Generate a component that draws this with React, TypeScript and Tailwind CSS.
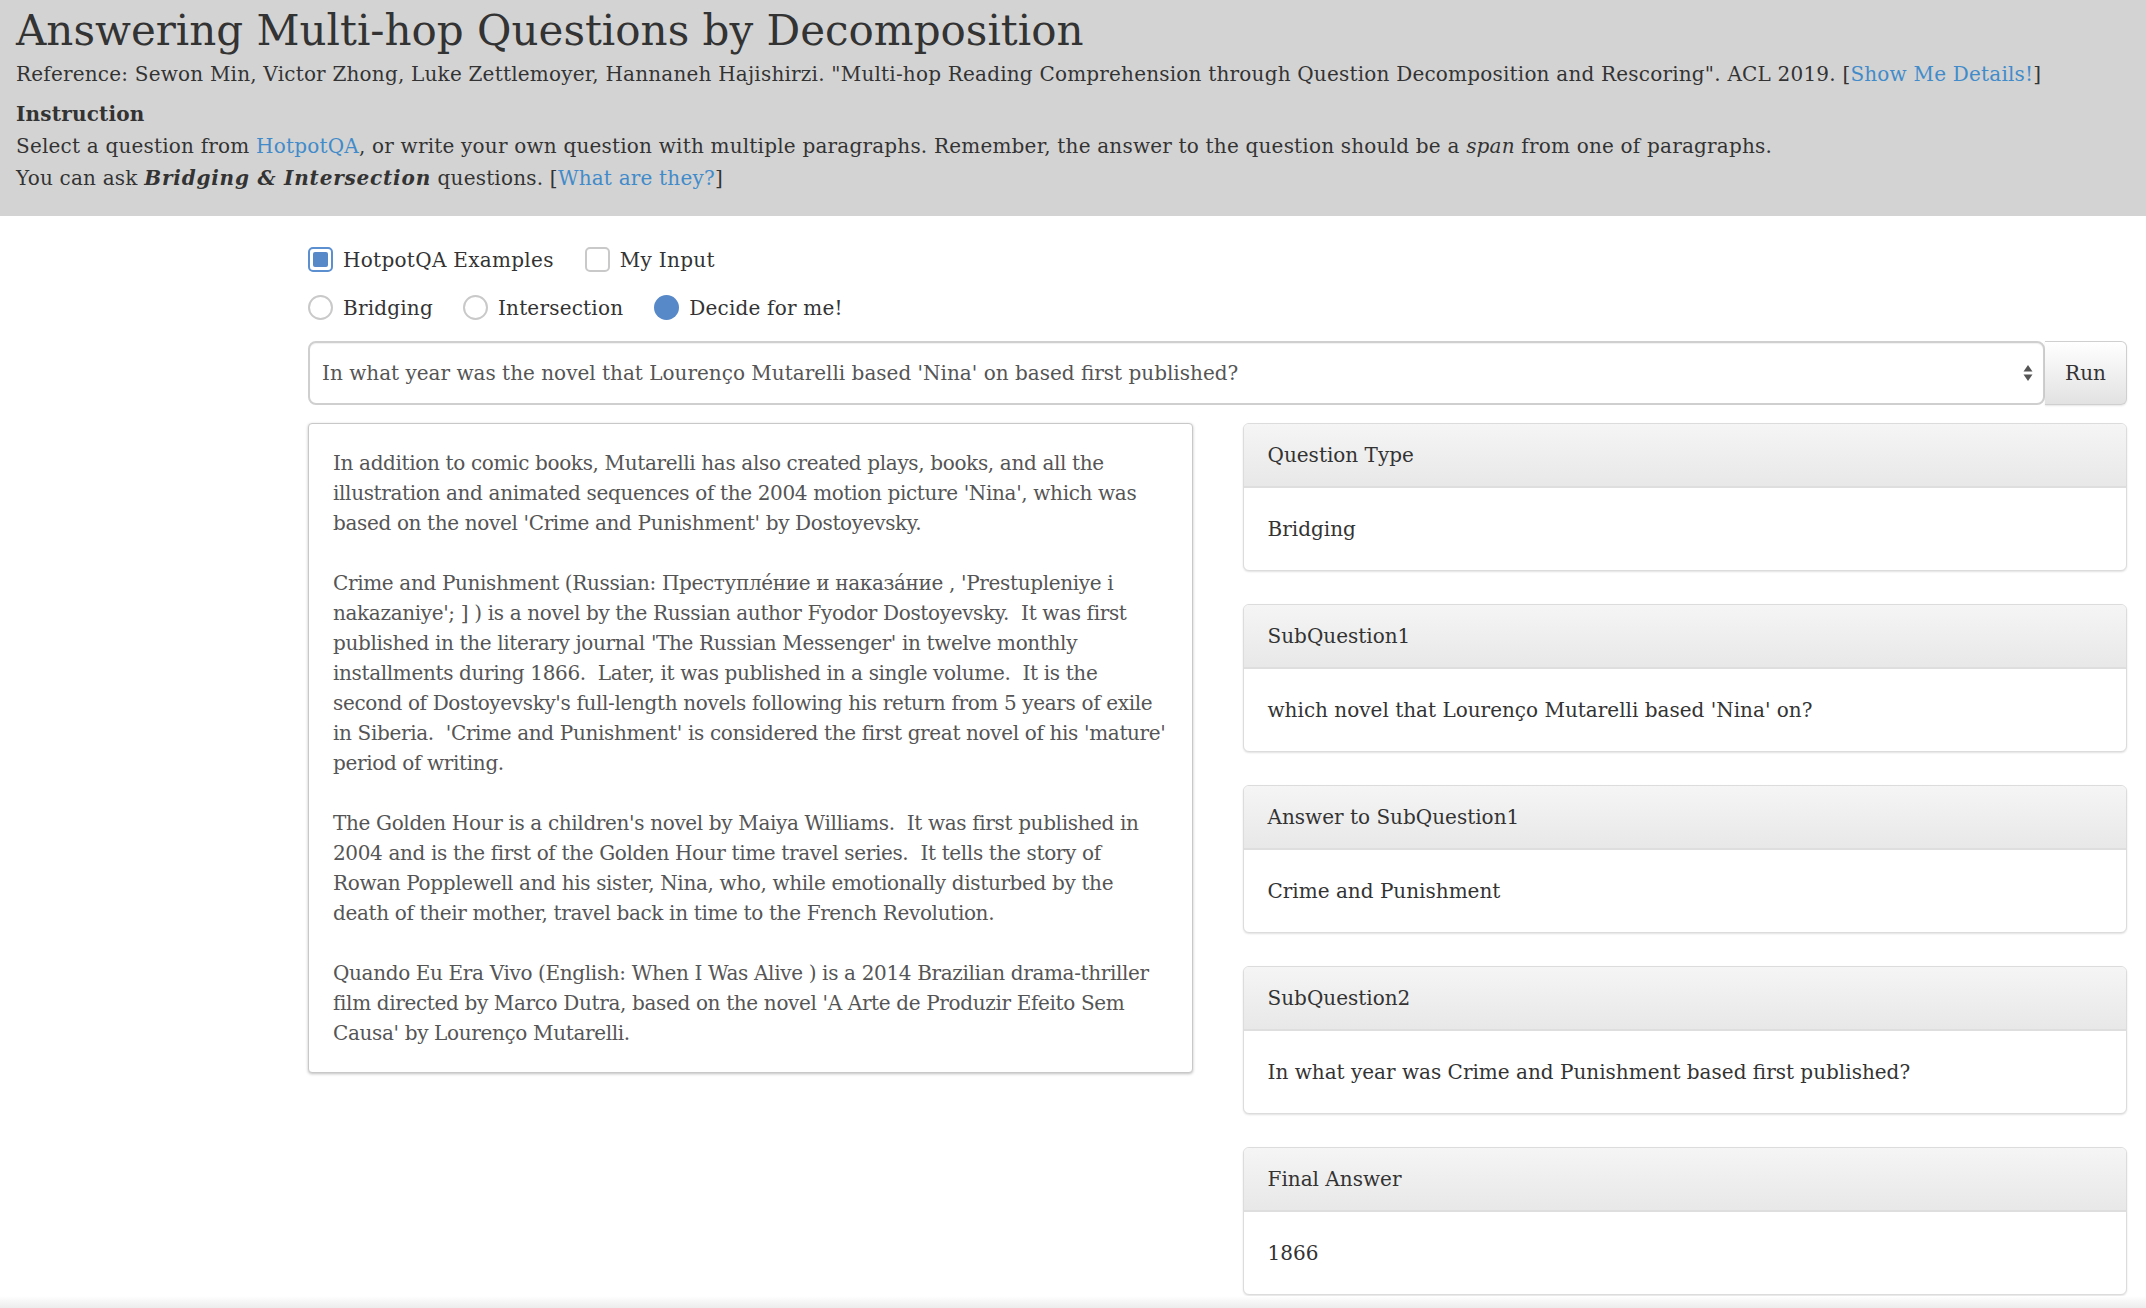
import React from "react";

const paragraphs: string[][] = [
  [
    "In addition to comic books, Mutarelli has also created plays, books, and all the",
    "illustration and animated sequences of the 2004 motion picture 'Nina', which was",
    "based on the novel 'Crime and Punishment' by Dostoyevsky.",
  ],
  [
    "Crime and Punishment (Russian: Преступле\u0301ние и наказа\u0301ние , 'Prestupleniye i",
    "nakazaniye'; ] ) is a novel by the Russian author Fyodor Dostoyevsky.  It was first",
    "published in the literary journal 'The Russian Messenger' in twelve monthly",
    "installments during 1866.  Later, it was published in a single volume.  It is the",
    "second of Dostoyevsky's full-length novels following his return from 5 years of exile",
    "in Siberia.  'Crime and Punishment' is considered the first great novel of his 'mature'",
    "period of writing.",
  ],
  [
    "The Golden Hour is a children's novel by Maiya Williams.  It was first published in",
    "2004 and is the first of the Golden Hour time travel series.  It tells the story of",
    "Rowan Popplewell and his sister, Nina, who, while emotionally disturbed by the",
    "death of their mother, travel back in time to the French Revolution.",
  ],
  [
    "Quando Eu Era Vivo (English: When I Was Alive ) is a 2014 Brazilian drama-thriller",
    "film directed by Marco Dutra, based on the novel 'A Arte de Produzir Efeito Sem",
    "Causa' by Lourenço Mutarelli.",
  ],
];

const results = [
  { title: "Question Type", value: "Bridging" },
  { title: "SubQuestion1", value: "which novel that Lourenço Mutarelli based 'Nina' on?" },
  { title: "Answer to SubQuestion1", value: "Crime and Punishment" },
  { title: "SubQuestion2", value: "In what year was Crime and Punishment based first published?" },
  { title: "Final Answer", value: "1866" },
];

function Checkbox({ checked }: { checked: boolean }) {
  if (checked) {
    return (
      <span className="flex h-[25px] w-[25px] shrink-0 rounded-[5px] border-2 border-[#5b8fd0] bg-white p-[3px]">
        <span className="block h-full w-full rounded-[2px] bg-[#5788c8]" />
      </span>
    );
  }
  return <span className="block h-[25px] w-[25px] shrink-0 rounded-[5px] border-2 border-[#c9c9c9] bg-white" />;
}

function Radio({ checked }: { checked: boolean }) {
  if (checked) {
    return <span className="block h-[25px] w-[25px] shrink-0 rounded-full bg-[#5788c8]" />;
  }
  return <span className="block h-[25px] w-[25px] shrink-0 rounded-full border-2 border-[#c9c9c9] bg-white" />;
}

function ResultPanel({ title, value }: { title: string; value: string }) {
  return (
    <div className="overflow-hidden rounded-[6px] border border-[#dcdcdc] bg-white shadow-[0_1px_2px_rgba(0,0,0,0.12)]">
      <div className="flex h-[64px] items-center border-b-2 border-[#dedede] bg-gradient-to-b from-[#f5f5f5] to-[#e8e8e8] px-[24px] text-[#333]">
        {title}
      </div>
      <div className="flex h-[82px] items-center px-[24px] text-[#333]">{value}</div>
    </div>
  );
}

export default function App() {
  return (
    <div className="flex min-h-[1308px] flex-col bg-white font-['DejaVu_Serif',serif] text-[20px] text-[#333]">
      {/* Header */}
      <header className="h-[216px] bg-[#d3d3d3] px-[16px] tracking-[0.2px]">
        <h1 className="pt-[3px] text-[42px] leading-[55px] font-normal tracking-normal text-[#333]">
          Answering Multi-hop Questions by Decomposition
        </h1>
        <p className="leading-[32px] whitespace-nowrap">
          Reference: Sewon Min, Victor Zhong, Luke Zettlemoyer, Hannaneh Hajishirzi. "Multi-hop Reading Comprehension
          through Question Decomposition and Rescoring". ACL 2019. [
          <a className="text-[#428bca]">Show Me Details!</a>]
        </p>
        <h4 className="mt-[8px] leading-[32px] font-bold">Instruction</h4>
        <p className="leading-[32px]">
          Select a question from <a className="text-[#428bca]">HotpotQA</a>, or write your own question with multiple
          paragraphs. Remember, the answer to the question should be a <i>span</i> from one of paragraphs.
        </p>
        <p className="leading-[32px]">
          You can ask{" "}
          <b className="tracking-[0.8px]">
            <i>Bridging &amp; Intersection</i>
          </b>{" "}
          questions. [<a className="text-[#428bca]">What are they?</a>]
        </p>
      </header>

      {/* Main */}
      <main className="pl-[308px] pr-[19px]">
        <div className="mt-[31px] flex h-[25px] items-center tracking-[0.3px]">
          <label className="flex items-center gap-[10px]">
            <Checkbox checked />
            <span>HotpotQA Examples</span>
          </label>
          <label className="ml-[31px] flex items-center gap-[10px]">
            <Checkbox checked={false} />
            <span>My Input</span>
          </label>
        </div>

        <div className="mt-[23px] flex h-[25px] items-center tracking-[0.2px]">
          <label className="flex items-center gap-[10px]">
            <Radio checked={false} />
            <span>Bridging</span>
          </label>
          <label className="ml-[30px] flex items-center gap-[10px]">
            <Radio checked={false} />
            <span>Intersection</span>
          </label>
          <label className="ml-[31px] flex items-center gap-[10px]">
            <Radio checked />
            <span>Decide for me!</span>
          </label>
        </div>

        <div className="mt-[21px] flex h-[64px]">
          <div className="flex flex-1 items-center rounded-[8px] border-2 border-[#cfcfcf] bg-white pr-[10px] pl-[12px] text-[#555] shadow-[inset_0_1px_1px_rgba(0,0,0,0.06)]">
            <span className="flex-1">
              In what year was the novel that Lourenço Mutarelli based 'Nina' on based first published?
            </span>
            <svg width="10" height="18" viewBox="0 0 10 18" className="shrink-0">
              <path d="M5 1 L9.5 7.5 H0.5 Z" fill="#555" />
              <path d="M5 17 L9.5 10.5 H0.5 Z" fill="#555" />
            </svg>
          </div>
          <button className="w-[82px] rounded-r-[6px] border border-l-0 border-[#cfcfcf] bg-gradient-to-b from-white to-[#e2e2e2] text-[#333] shadow-[0_1px_2px_rgba(0,0,0,0.1)]">
            Run
          </button>
        </div>

        <div className="mt-[18px] grid grid-cols-2 gap-[50px]">
          <div className="self-start rounded-[4px] border border-[#c8c8c8] bg-white px-[24px] py-[24px] tracking-[-0.35px] text-[#555] shadow-[0_1px_3px_rgba(0,0,0,0.25)]">
            {paragraphs.map((lines, i) => (
              <div key={i} className={i > 0 ? "mt-[30px]" : ""}>
                {lines.map((line, j) => (
                  <div key={j} className="leading-[30px] whitespace-pre">
                    {line}
                  </div>
                ))}
              </div>
            ))}
          </div>

          <div className="flex flex-col gap-[33px]">
            {results.map((r) => (
              <ResultPanel key={r.title} title={r.title} value={r.value} />
            ))}
          </div>
        </div>
      </main>

      <div className="mt-auto h-[12px] bg-gradient-to-b from-white to-[#ececec]" />
    </div>
  );
}
